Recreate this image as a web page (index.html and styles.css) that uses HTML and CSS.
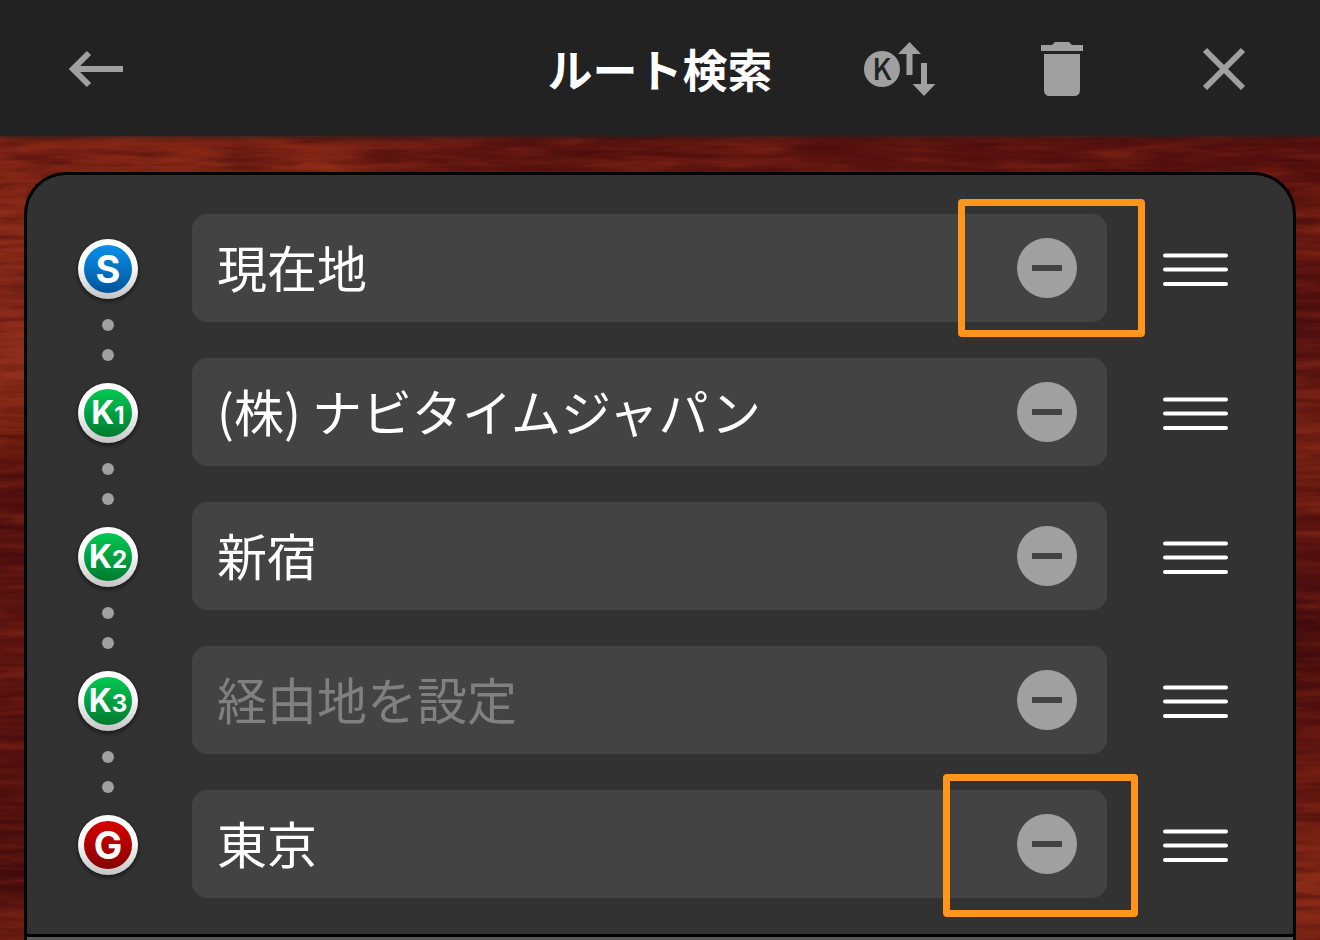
FILE: index.html
```html
<!DOCTYPE html>
<html lang="ja">
<head>
    <meta charset="UTF-8">
    <meta name="viewport" content="width=device-width, initial-scale=1.0">
    <title>ルート検索</title>
    <link rel="stylesheet" href="styles.css">
</head>
<body>

    <header class="header">
        <button type="button" class="icon-button" aria-label="戻る">
            <svg width="72" height="54" viewBox="0 0 72 54"><path d="M29 11 13 27 29 43M14 27H63" fill="none" stroke="#a0a0a0" stroke-width="6"/></svg>
        </button>
        <h1 class="title">ルート検索</h1>
        <div class="actions">
            <button type="button" class="icon-button" aria-label="経由地を並べ替え">
                <svg width="72" height="54" viewBox="0 0 72 54" fill="#a0a0a0">
                    <circle cx="18" cy="27" r="18"/>
                    <text class="icon-letter" x="18" y="38" text-anchor="middle">K</text>
                    <path d="M45.500 0 57 12H48.500V33H42.500V12H34zM57 21H63V42H71.500L60 54 48.500 42H57z"/>
                </svg>
            </button>
            <button type="button" class="icon-button" aria-label="削除">
                <svg width="72" height="54" viewBox="0 0 72 54" fill="#a0a0a0"><path d="M15 3H26L29 0H43L46 3H57V9H15zM18 12H54V48Q54 54 48 54H24Q18 54 18 48z"/></svg>
            </button>
            <button type="button" class="icon-button" aria-label="閉じる">
                <svg width="72" height="54" viewBox="0 0 72 54"><path d="M17 8 55 46M55 8 17 46" fill="none" stroke="#a0a0a0" stroke-width="6"/></svg>
            </button>
        </div>
    </header>

    <main class="panel">
        <ul class="route">
            <li class="stop">
                <div class="marker">
                    <span class="badge start">S</span>
                    <span class="dot"></span>
                    <span class="dot"></span>
                </div>
                <div class="field">
                    <input type="text" class="place" aria-label="出発地" value="現在地">
                    <button type="button" class="remove" aria-label="出発地を削除"></button>
                    <div class="highlight highlight-start"></div>
                </div>
                <button type="button" class="handle" aria-label="並べ替え">
                    <svg width="65" height="38" viewBox="0 0 65 38"><path d="M2 6.500H63M2 20.500H63M2 35H63" stroke="#fff" stroke-width="4" stroke-linecap="round"/></svg>
                </button>
            </li>
            <li class="stop">
                <div class="marker">
                    <span class="badge via">K<small>1</small></span>
                    <span class="dot"></span>
                    <span class="dot"></span>
                </div>
                <div class="field">
                    <input type="text" class="place" aria-label="経由地1" value="(株) ナビタイムジャパン">
                    <button type="button" class="remove" aria-label="経由地1を削除"></button>
                </div>
                <button type="button" class="handle" aria-label="並べ替え">
                    <svg width="65" height="38" viewBox="0 0 65 38"><path d="M2 6.500H63M2 20.500H63M2 35H63" stroke="#fff" stroke-width="4" stroke-linecap="round"/></svg>
                </button>
            </li>
            <li class="stop">
                <div class="marker">
                    <span class="badge via">K<small>2</small></span>
                    <span class="dot"></span>
                    <span class="dot"></span>
                </div>
                <div class="field">
                    <input type="text" class="place" aria-label="経由地2" value="新宿">
                    <button type="button" class="remove" aria-label="経由地2を削除"></button>
                </div>
                <button type="button" class="handle" aria-label="並べ替え">
                    <svg width="65" height="38" viewBox="0 0 65 38"><path d="M2 6.500H63M2 20.500H63M2 35H63" stroke="#fff" stroke-width="4" stroke-linecap="round"/></svg>
                </button>
            </li>
            <li class="stop">
                <div class="marker">
                    <span class="badge via">K<small>3</small></span>
                    <span class="dot"></span>
                    <span class="dot"></span>
                </div>
                <div class="field">
                    <input type="text" class="place" aria-label="経由地3" placeholder="経由地を設定">
                    <button type="button" class="remove" aria-label="経由地3を削除"></button>
                </div>
                <button type="button" class="handle" aria-label="並べ替え">
                    <svg width="65" height="38" viewBox="0 0 65 38"><path d="M2 6.500H63M2 20.500H63M2 35H63" stroke="#fff" stroke-width="4" stroke-linecap="round"/></svg>
                </button>
            </li>
            <li class="stop">
                <div class="marker">
                    <span class="badge goal">G</span>
                </div>
                <div class="field">
                    <input type="text" class="place" aria-label="目的地" value="東京">
                    <button type="button" class="remove" aria-label="目的地を削除"></button>
                    <div class="highlight highlight-goal"></div>
                </div>
                <button type="button" class="handle" aria-label="並べ替え">
                    <svg width="65" height="38" viewBox="0 0 65 38"><path d="M2 6.500H63M2 20.500H63M2 35H63" stroke="#fff" stroke-width="4" stroke-linecap="round"/></svg>
                </button>
            </li>
        </ul>
        <div class="options"></div>
    </main>

</body>
</html>
```

FILE: styles.css
```css
* {
    box-sizing: border-box;
}

/* Wood grain: fine streaks over broad bands of colour */
body {
    margin: 0;
    height: 100vh;
    overflow: hidden;
    display: flex;
    flex-direction: column;
    font-family: "Inter", "Noto Sans CJK JP", sans-serif;
    color: #fff;
    background:
        url("data:image/svg+xml,%3Csvg xmlns='http://www.w3.org/2000/svg' width='1320' height='940'%3E%3Cfilter id='a' x='0' y='0' width='100%25' height='100%25' color-interpolation-filters='sRGB'%3E%3CfeTurbulence type='fractalNoise' baseFrequency='.014 .12' numOctaves='4' seed='4'/%3E%3CfeColorMatrix values='0 0 0 0 .25 0 0 0 0 .03 0 0 0 0 .03 1.2 0 0 0 -.48'/%3E%3C/filter%3E%3Crect width='1320' height='940' filter='url(%23a)'/%3E%3C/svg%3E"),
        url("data:image/svg+xml,%3Csvg xmlns='http://www.w3.org/2000/svg' width='1320' height='940'%3E%3Cfilter id='a' x='0' y='0' width='100%25' height='100%25' color-interpolation-filters='sRGB'%3E%3CfeTurbulence type='fractalNoise' baseFrequency='.01 .1' numOctaves='3' seed='9'/%3E%3CfeColorMatrix values='0 0 0 0 .62 0 0 0 0 .2 0 0 0 0 .1 1.1 0 0 0 -.45'/%3E%3C/filter%3E%3Crect width='1320' height='940' filter='url(%23a)'/%3E%3C/svg%3E"),
        linear-gradient(#7f2415 18%, #8a2c19 23%, #84281a 32%, #8f2f1b 40%, #74200f 47%, #57120e 50%, #4c0e0e 59%, #5c140f 66%, #56110f 76%, #430c0d 95%, #6b1d12 98%) left / 26px 100% no-repeat,
        linear-gradient(#540f0e 18%, #6b1a10 24%, #480c0e 34%, #7a2315 44%, #671a11 53%, #521010 60%, #3f0a0c 68%, #5c140f 78%, #66180f 86%, #8a2c18 93%, #7a2213 100%) right / 26px 100% no-repeat,
        linear-gradient(90deg, #7f2415 0%, #7f2415 25%, #5b130f 35%, #5b130f 65%, #540f0e 100%);
}

button {
    padding: 0;
    border: none;
    background: none;
    cursor: pointer;
}

svg {
    display: block;
}

/* Header */
.header {
    flex: none;
    height: 136px;
    padding: 2px 60px 0;
    display: grid;
    grid-template-columns: 1fr auto 1fr;
    align-items: center;
    background: #222;
    box-shadow: 0 1px 6px rgba(34, 34, 34, 0.9);
}

.icon-button {
    width: 72px;
}

.icon-letter {
    font-family: "Noto Sans CJK JP", sans-serif;
    font-size: 29px;
    font-weight: 500;
    fill: #222;
}

.title {
    margin: 0;
    font-family: "Noto Sans CJK JP", sans-serif;
    font-size: 45px;
    line-height: 64px;
    font-weight: 700;
}

.actions {
    display: flex;
    justify-content: flex-end;
    gap: 90px;
}

/* Route panel */
.panel {
    flex: 1;
    display: flex;
    flex-direction: column;
    margin: 36px 24px 0;
    border: 3px solid #000;
    border-bottom: none;
    border-radius: 42px 42px 0 0;
    background: #323232;
}

.route {
    list-style: none;
    margin: 0;
    padding: 39px 65px 36px 51px;
    display: flex;
    flex-direction: column;
    gap: 36px;
}

.stop {
    display: flex;
    height: 108px;
}

.marker {
    flex: none;
    width: 60px;
    margin-right: 54px;
    padding-top: 25px;
    display: flex;
    flex-direction: column;
    align-items: center;
    gap: 18px;
}

.badge {
    flex: none;
    width: 60px;
    height: 60px;
    margin-bottom: 2px;
    display: flex;
    align-items: baseline;
    justify-content: center;
    border: 6px solid transparent;
    border-radius: 50%;
    font-size: 38px;
    line-height: 48px;
    font-weight: 700;
    box-shadow: 0 2px 5px rgba(0, 0, 0, 0.6);
}

.via {
    font-size: 32px;
}

.badge small {
    font-size: 24px;
}

.start {
    background: linear-gradient(#0a90ec, #00549a) padding-box, linear-gradient(#fff 40%, #c4c4c4) border-box;
}

.via {
    background: linear-gradient(#00c853, #007a30) padding-box, linear-gradient(#fff 40%, #c4c4c4) border-box;
}

.goal {
    background: linear-gradient(#d80000, #860000) padding-box, linear-gradient(#fff 40%, #c4c4c4) border-box;
}

.dot {
    flex: none;
    width: 12px;
    height: 12px;
    border-radius: 50%;
    background: #a0a0a0;
}

.field {
    position: relative;
    flex: 1;
    min-width: 0;
    display: flex;
    align-items: center;
    padding: 0 30px 0 25px;
    border-radius: 15px;
    background: #434343;
}

.place {
    flex: 1;
    min-width: 0;
    height: 84px;
    padding: 0 0 5px;
    border: none;
    outline: none;
    background: none;
    color: #fff;
    font-family: "Noto Sans CJK JP", sans-serif;
    font-size: 50px;
}

.place::placeholder {
    color: #808080;
    opacity: 1;
}

.remove {
    width: 60px;
    height: 60px;
    display: flex;
    align-items: center;
    justify-content: center;
    border-radius: 50%;
    background: #a0a0a0;
}

.remove::before {
    content: "";
    width: 30px;
    height: 6px;
    background: #434343;
}

.handle {
    flex: none;
    width: 65px;
    margin-left: 56px;
}

/* Frames drawn over the remove buttons */
.highlight {
    position: absolute;
    border: 7px solid #ff951a;
    border-radius: 4px;
    pointer-events: none;
}

.highlight-start {
    top: -15px;
    right: -38px;
    width: 187px;
    height: 138px;
}

.highlight-goal {
    top: -16px;
    right: -31px;
    width: 195px;
    height: 143px;
}

.options {
    flex: 1;
    border-top: 3px solid #000;
    background: #5a5a5a;
}
```
